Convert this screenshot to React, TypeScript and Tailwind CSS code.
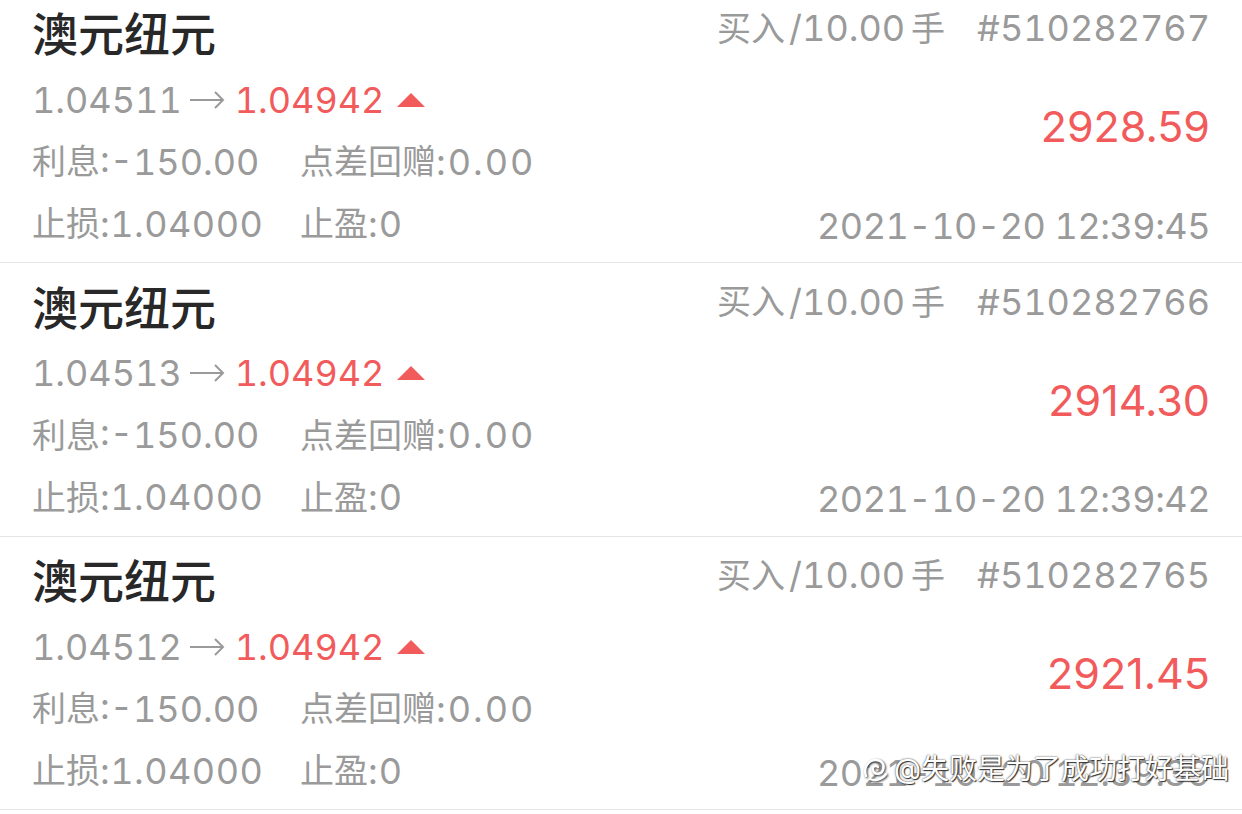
import React from 'react';

const orders = [
  { id: '510282767', open: '1.04511', profit: '2928.59', time: '2021-10-20 12:39:45' },
  { id: '510282766', open: '1.04513', profit: '2914.30', time: '2021-10-20 12:39:42' },
  { id: '510282765', open: '1.04512', profit: '2921.45', time: '2021-10-20 12:39:39' },
];

const font = "font-['Inter','Noto_Sans_CJK_SC',sans-serif]";
const grey = 'text-[36px] tabular-nums text-[#9a9a9a]';

// chinese glyphs run a bit smaller than the digits
const Zh = ({ children }: { children: React.ReactNode }) => <span className="text-[34px]">{children}</span>;

const OrderRow = ({ order }: { order: (typeof orders)[number] }) => {
  return (
    <div className="flex justify-between h-[273.5px] px-[32px] pt-[14px] border-b-[1.5px] border-[#e6e6e6]">
      {/* left side */}
      <div className="flex flex-col">
        <div className="h-[62px] flex items-center text-[46px] font-medium text-[#282828]">澳元纽元</div>
        <div className="mt-[3px]">
          <div className={`h-[62px] flex items-center ${grey}`}>
            <span>{order.open}</span>
            <svg width="36" height="20" viewBox="0 0 36 20" className="ml-[7px] mr-[10px]">
              <path d="M1 10 H34 M26 2 L34 10 L26 18" fill="none" stroke="#9a9a9a" strokeWidth="2" />
            </svg>
            <span className="text-[#f25b5b]">1.04942</span>
            <svg width="28" height="14" viewBox="0 0 28 14" className="ml-[13px]">
              <polygon points="14,0 28,14 0,14" fill="#f25b5b" />
            </svg>
          </div>
          <div className={`h-[62px] flex items-center ${grey}`}>
            <span className="w-[268px] flex items-center">
              <Zh>利息</Zh>
              <span>:-150.00</span>
            </span>
            <Zh>点差回赠</Zh>
            <span className="tracking-[2px]">:0.00</span>
          </div>
          <div className={`h-[62px] flex items-center ${grey}`}>
            <span className="w-[268px] flex items-center">
              <Zh>止损</Zh>
              <span className="tracking-[0.5px]">:1.04000</span>
            </span>
            <Zh>止盈</Zh>
            <span className="tracking-[1px]">:0</span>
          </div>
        </div>
      </div>

      {/* right side */}
      <div className="flex flex-col items-end">
        <div className={`h-[49px] flex items-center ${grey}`}>
          <Zh>买入</Zh>
          <span className="ml-[4px]">/10.00</span>
          <span className="ml-[6px]">
            <Zh>手</Zh>
          </span>
          <span className="ml-[32px]">#{order.id}</span>
        </div>
        <div className="mt-[43px] h-[62px] flex items-center text-[43px] text-[#f25b5b]">{order.profit}</div>
        <div className={`mt-[37px] h-[62px] flex items-center tracking-[-0.5px] ${grey}`}>{order.time}</div>
      </div>
    </div>
  );
};

const App = () => {
  return (
    <div className={`relative w-[1242px] h-[814px] overflow-hidden bg-white ${font}`}>
      <div className="-mt-[10.5px]">
        {orders.map((o) => (
          <OrderRow key={o.id} order={o} />
        ))}
      </div>

      {/* watermark */}
      <div className="absolute left-[860px] top-[748px] flex items-center text-[28px] text-white [text-shadow:0_0_2px_#333,1px_1px_1px_#333]">
        <svg width="30" height="30" viewBox="0 0 30 30" className="mr-[4px] drop-shadow-[1px_1px_1px_#333]">
          <path d="M6 22 C3 14 8 6 16 6 C22 6 25 11 23 16 C21 21 14 21 13 16 C12 12 16 11 18 13" fill="none" stroke="#fff" strokeWidth="2.4" strokeLinecap="round" />
          <path d="M10 25 C14 27 22 26 26 20" fill="none" stroke="#fff" strokeWidth="2.4" strokeLinecap="round" />
        </svg>
        <span>@失败是为了成功打好基础</span>
      </div>
    </div>
  );
};

export default App;
